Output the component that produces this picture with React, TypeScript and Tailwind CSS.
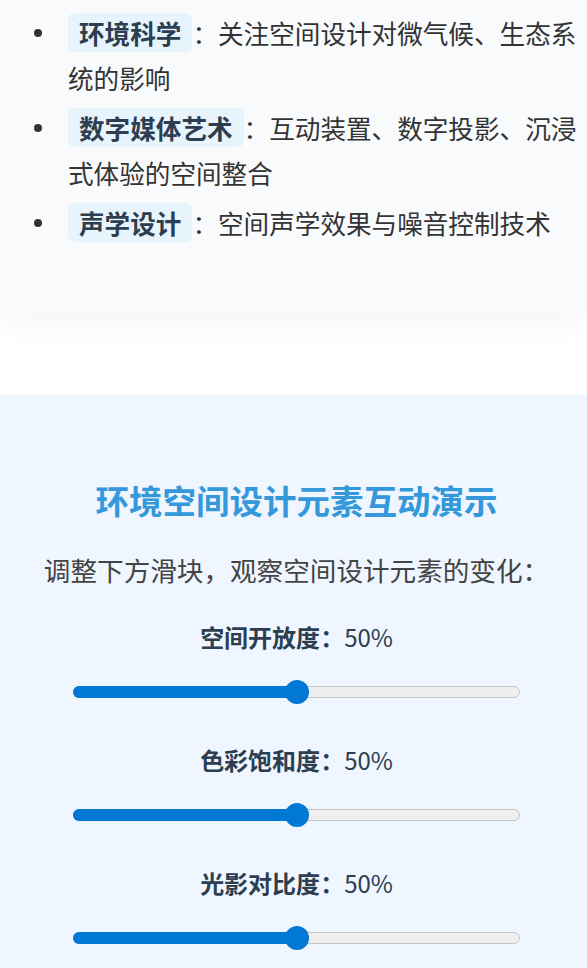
import { useState } from "react";

const FIELDS = [
  { name: "环境科学", desc: "关注空间设计对微气候、生态系统的影响" },
  { name: "数字媒体艺术", desc: "互动装置、数字投影、沉浸式体验的空间整合" },
  { name: "声学设计", desc: "空间声学效果与噪音控制技术" },
];

const CONTROLS = [
  { id: "openness", label: "空间开放度" },
  { id: "saturation", label: "色彩饱和度" },
  { id: "contrast", label: "光影对比度" },
];

function Slider({ value }: { value: number }) {
  return (
    <div className="relative mx-auto h-6 w-[447px]">
      {/* track */}
      <div className="absolute left-0 right-0 top-[6px] h-3 rounded-full border border-[#c6c6c6] bg-[#efefef]" />
      {/* filled part */}
      <div
        className="absolute left-0 top-[6px] h-3 rounded-full bg-[#0078d4]"
        style={{ width: `${value}%` }}
      />
      {/* thumb */}
      <div
        className="absolute top-0 h-6 w-6 -translate-x-1/2 rounded-full bg-[#0078d4]"
        style={{ left: `${value}%` }}
      />
    </div>
  );
}

export default function App() {
  const [values] = useState<Record<string, number>>({
    openness: 50,
    saturation: 50,
    contrast: 50,
  });

  return (
    <div className="min-h-[968px] bg-white font-['Noto_Sans_CJK_SC',sans-serif]">
      {/* Related fields card */}
      <section className="bg-[#f8fafc] pt-[10px] pb-[65px] shadow-[0_8px_30px_rgba(0,0,0,0.045)]">
        <ul className="pr-[7px]">
          {FIELDS.map((f) => (
            <li key={f.name} className="mb-[5px] flex text-[25.6px] leading-[45px] text-[#333]">
              <div className="flex h-[45px] w-[68px] shrink-0 items-center">
                <span className="ml-[34px] h-2 w-2 rounded-full bg-[#333]" />
              </div>
              <p>
                <span className="rounded-md bg-[#e8f4fc] px-[11px] py-[1px] font-bold text-[#2c3e50]">
                  {f.name}
                </span>
                ：{f.desc}
              </p>
            </li>
          ))}
        </ul>
      </section>

      <div className="h-[80px]" />

      {/* Interactive demo */}
      <section className="bg-[#eff6ff] pl-[26px] pr-[20px] pt-[83px] pb-10 text-center">
        <h2 className="text-[33.5px] font-bold leading-[43px] text-[#3498db]">
          环境空间设计元素互动演示
        </h2>
        <p className="mt-[28px] text-[26.6px] leading-[41px] text-[#444]">
          调整下方滑块，观察空间设计元素的变化：
        </p>

        <div className="mt-[29px] flex flex-col gap-[38px]">
          {CONTROLS.map((c) => (
            <div key={c.id}>
              <div className="text-[24px] leading-[36px] text-[#2c3e50]">
                <span className="font-bold">{c.label}：</span>
                {values[c.id]}%
              </div>
              <div className="mt-[25px]">
                <Slider value={values[c.id]} />
              </div>
            </div>
          ))}
        </div>
      </section>
    </div>
  );
}
